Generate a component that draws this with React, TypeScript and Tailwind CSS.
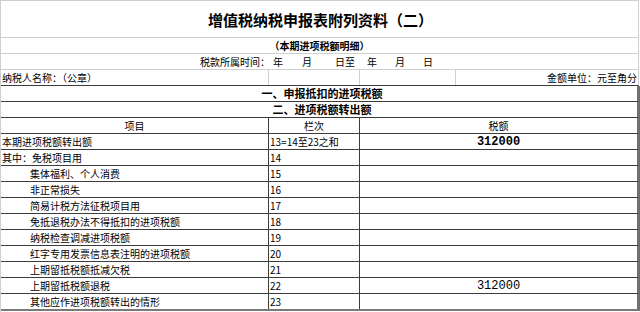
import React from "react";

type Row = { item: string; code: string; amt?: string; bold?: boolean; indent?: boolean };

const rows: Row[] = [
  { item: "本期进项税额转出额", code: "13=14至23之和", amt: "312000", bold: true },
  { item: "其中：免税项目用", code: "14" },
  { item: "集体福利、个人消费", code: "15", indent: true },
  { item: "非正常损失", code: "16", indent: true },
  { item: "简易计税方法征税项目用", code: "17", indent: true },
  { item: "免抵退税办法不得抵扣的进项税额", code: "18", indent: true },
  { item: "纳税检查调减进项税额", code: "19", indent: true },
  { item: "红字专用发票信息表注明的进项税额", code: "20", indent: true },
  { item: "上期留抵税额抵减欠税", code: "21", indent: true },
  { item: "上期留抵税额退税", code: "22", indent: true, amt: "312000" },
  { item: "其他应作进项税额转出的情形", code: "23", indent: true },
];

export default function App() {
  return (
    <div
      className="w-[640px] h-[312px] bg-white overflow-hidden text-black border-l border-[#cfcfcf] flex flex-col"
      style={{ fontFamily: '"Noto Sans CJK SC", "Noto Sans", sans-serif' }}
    >
      {/* title */}
      <div className="h-[38px] w-[638px] border-t border-b border-r border-[#cfcfcf] flex items-center justify-center">
        <span className="text-[15px] font-bold leading-none tracking-[0px] pl-[2px]">增值税纳税申报表附列资料（二）</span>
      </div>
      <div className="h-[16px] w-[638px] border-b border-r border-[#cfcfcf] flex items-center justify-center">
        <span className="text-[10px] font-bold leading-none">（本期进项税额明细）</span>
      </div>
      <div className="h-[16px] w-[638px] border-b border-r border-[#cfcfcf] flex items-center pl-[199px] text-[10px] leading-none">
        <span>税款所属时间：</span>
        <span className="ml-[3px]">年</span>
        <span className="ml-[19px]">月</span>
        <span className="ml-[23px]">日至</span>
        <span className="ml-[12px]">年</span>
        <span className="ml-[18px]">月</span>
        <span className="ml-[18px]">日</span>
      </div>
      <div className="h-[16px] w-[638px] border-b border-b-[#3c3c3c] border-r border-r-[#cfcfcf] flex text-[10px] leading-none">
        <div className="w-[267px] flex items-center pl-[1px] whitespace-nowrap">纳税人名称：（公章）</div>
        <div className="w-[91px] border-l border-[#cfcfcf]" />
        <div className="w-[96px] border-l border-[#cfcfcf]" />
        <div className="flex-1 border-l border-[#cfcfcf] flex items-center justify-end pr-[1px]">金额单位：元至角分</div>
      </div>
      {/* section heads */}
      <div className="h-[16px] w-[639px] border-b border-b-[#3c3c3c] border-r-[3px] border-r-[#707070] flex items-center justify-center">
        <span className="text-[11px] font-bold leading-none pl-[6px]">一、申报抵扣的进项税额</span>
      </div>
      <div className="h-[16px] w-[639px] border-b border-b-[#3c3c3c] border-r-[3px] border-r-[#707070] flex items-center justify-center">
        <span className="text-[11px] font-bold leading-none pl-[6px]">二、进项税额转出额</span>
      </div>
      {/* header */}
      <div className="h-[16px] w-[639px] border-b border-b-[#3c3c3c] border-r-[3px] border-r-[#707070] flex text-[10px] leading-none">
        <div className="w-[267px] flex items-center justify-center">项目</div>
        <div className="w-[91px] border-l border-[#3c3c3c] flex items-center justify-center">栏次</div>
        <div className="flex-1 border-l border-[#3c3c3c] flex items-center justify-center">税额</div>
      </div>
      {rows.map((r, i) => (
        <div
          key={i}
          className={
            i === rows.length - 1
              ? "h-[17px] w-[639px] border-b-2 border-b-[#7a7a7a] border-r-[3px] border-r-[#707070] flex text-[10px] leading-none"
              : "h-[16px] w-[639px] border-b border-b-[#3c3c3c] border-r-[3px] border-r-[#707070] flex text-[10px] leading-none"
          }
        >
          <div className={r.indent ? "w-[267px] flex items-center pl-[29px] whitespace-nowrap" : "w-[267px] flex items-center pl-[1px] whitespace-nowrap"}>
            {r.item}
          </div>
          <div className="w-[91px] border-l border-[#3c3c3c] flex items-center pl-[1px] whitespace-nowrap">{r.code}</div>
          <div className="flex-1 border-l border-[#3c3c3c] flex items-center justify-center">
            {r.amt ? (
              <span
                className={r.bold ? "text-[12px] font-bold leading-none" : "text-[12px] leading-none"}
                style={{ fontFamily: '"Liberation Mono", monospace' }}
              >
                {r.amt}
              </span>
            ) : null}
          </div>
        </div>
      ))}
    </div>
  );
}
